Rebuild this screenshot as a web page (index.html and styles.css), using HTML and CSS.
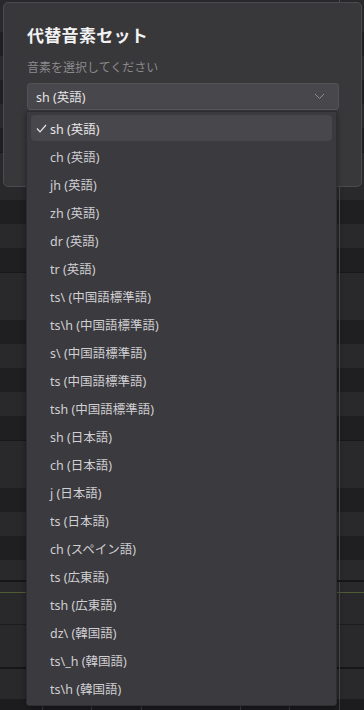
FILE: index.html
```html
<!DOCTYPE html>
<html lang="ja">
<head>
<meta charset="utf-8">
<link rel="stylesheet" href="styles.css">
</head>
<body>
<div class="stage">
  <div class="roll">
    <div class="keys">
      <div class="row w top-pad"></div>
      <div class="row b"></div>
      <div class="row w"></div>
      <div class="row b"></div>
      <div class="row w"></div>
      <div class="row b"></div>
      <div class="row w sep"></div>
      <div class="row w"></div>
      <div class="row b"></div>
      <div class="row w"></div>
      <div class="row b"></div>
      <div class="row w sep"></div>
      <div class="row w"></div>
      <div class="row b"></div>
      <div class="row w"></div>
      <div class="row b"></div>
      <div class="row w"></div>
      <div class="row b"></div>
      <div class="row w sep"></div>
      <div class="row w"></div>
      <div class="row b"></div>
      <div class="row w"></div>
      <div class="row b"></div>
      <div class="row w last"></div>
    </div>
    <div class="panel">
      <div class="curve"></div>
      <div class="pline p1"></div>
      <div class="pline p2"></div>
      <div class="pline p3"></div>
    </div>
    <div class="ruler"></div>
  </div>

  <div class="dialog">
    <h1 class="title">代替音素セット</h1>
    <p class="subtitle">音素を選択してください</p>
    <div class="select">
      <span class="select-value">sh (英語)</span>
      <svg class="chevron" width="11" height="7" viewBox="0 0 11 7"><polyline points="1,1 5.5,5.5 10,1" fill="none" stroke="#8d8c90" stroke-width="1"/></svg>
    </div>
  </div>

  <ul class="menu">
    <li class="item selected"><svg class="check" width="11" height="9" viewBox="0 0 11 9"><polyline points="1,4.5 4,7.8 10,1" fill="none" stroke="#e6e6e8" stroke-width="1.2"/></svg>sh (英語)</li>
    <li class="item">ch (英語)</li>
    <li class="item">jh (英語)</li>
    <li class="item">zh (英語)</li>
    <li class="item">dr (英語)</li>
    <li class="item">tr (英語)</li>
    <li class="item">ts\ (中国語標準語)</li>
    <li class="item">ts\h (中国語標準語)</li>
    <li class="item">s\ (中国語標準語)</li>
    <li class="item">ts (中国語標準語)</li>
    <li class="item">tsh (中国語標準語)</li>
    <li class="item">sh (日本語)</li>
    <li class="item">ch (日本語)</li>
    <li class="item">j (日本語)</li>
    <li class="item">ts (日本語)</li>
    <li class="item">ch (スペイン語)</li>
    <li class="item">ts (広東語)</li>
    <li class="item">tsh (広東語)</li>
    <li class="item">dz\ (韓国語)</li>
    <li class="item">ts\_h (韓国語)</li>
    <li class="item">ts\h (韓国語)</li>
  </ul>
</div>
</body>
</html>
```

FILE: styles.css
```css
* { box-sizing: border-box; }
html, body {
  margin: 0;
  padding: 0;
  background: #1e1e20;
  font-family: "Noto Sans", "Noto Sans CJK JP", sans-serif;
}
.stage {
  position: relative;
  width: 364px;
  height: 710px;
  overflow: hidden;
}
.roll {
  display: flex;
  flex-direction: column;
  height: 710px;
  background-image: repeating-linear-gradient(to right, transparent 0, transparent 42px, rgba(0,0,0,0.35) 42px, rgba(0,0,0,0.35) 43px, transparent 43px, transparent 49.5px);
}
.keys {
  display: flex;
  flex-direction: column;
  height: 580px;
  overflow: hidden;
  position: relative;
}
.keys::after {
  content: "";
  position: absolute;
  left: 339px;
  top: 0;
  bottom: 0;
  width: 1px;
  background: #4a494d;
}
.row {
  flex: 0 0 24px;
  height: 24px;
}
.row.top-pad { flex-basis: 32px; height: 32px; }
.row.w { background: #29292b; }
.row.b { background: #1f1f21; }
.row.sep { border-top: 1px solid #18181a; }
.row.last { flex-basis: 20px; }
.panel {
  position: relative;
  height: 120px;
  background: #29292b;
  border-top: 2px solid #17171a;
}
.panel::after {
  content: "";
  position: absolute;
  left: 339px;
  top: 0;
  bottom: 0;
  width: 1px;
  background: #4a494d;
}
.curve {
  position: absolute;
  left: 0; right: 0;
  top: 10px;
  height: 1px;
  background: #4f5b35;
}
.pline { position: absolute; left: 0; right: 0; height: 1px; background: #1c1c1e; }
.p1 { top: 42px; }
.p2 { top: 85px; height: 2px; background: #161618; }
.p3 { top: 117px; }
.ruler {
  flex: 1;
  background: #1c1c1e;
  background-image: repeating-linear-gradient(to right, transparent 0, transparent 42px, #3c3b3f 42px, #3c3b3f 43px, transparent 43px, transparent 49.5px);
}

.dialog {
  position: absolute;
  left: 3px;
  top: 2px;
  width: 359px;
  height: 185px;
  background: #38373a;
  border: 1px solid #4b4a4e;
  border-radius: 5px;
  padding: 21px 23px 0 23px;
}
.title {
  margin: 0;
  font-size: 17px;
  line-height: 24px;
  font-weight: 700;
  color: #f2f2f3;
  letter-spacing: 0.3px;
}
.subtitle {
  margin: 11px 0 0 0;
  font-size: 12px;
  line-height: 18px;
  color: #8a898d;
}
.select {
  margin-top: 6px;
  height: 27px;
  width: 312px;
  background: #48474b;
  border: 1px solid #545357;
  border-bottom-color: #5c5b5f;
  border-radius: 4px;
  display: flex;
  align-items: center;
  justify-content: space-between;
  padding: 0 13px 0 8px;
}
.select-value {
  font-size: 12.5px;
  color: #e4e4e6;
}
.chevron { display: block; }

.menu {
  position: absolute;
  left: 26px;
  top: 111px;
  width: 311px;
  height: 595px;
  margin: 0;
  padding: 3px 4px;
  list-style: none;
  background: #3b3a3e;
  border: 1px solid #2e2d31;
  border-radius: 0 0 3px 3px;
  box-shadow: 0 2px 6px rgba(0,0,0,0.35);
  display: flex;
  flex-direction: column;
  gap: 2px;
}
.item {
  height: 26px;
  flex: 0 0 26px;
  display: flex;
  align-items: center;
  padding-left: 19px;
  font-size: 12.5px;
  color: #d0cfd3;
  border-radius: 4px;
  position: relative;
}
.item.selected {
  background: #48474b;
  color: #e8e8ea;
}
.check {
  position: absolute;
  left: 5px;
  top: 9px;
}
```
